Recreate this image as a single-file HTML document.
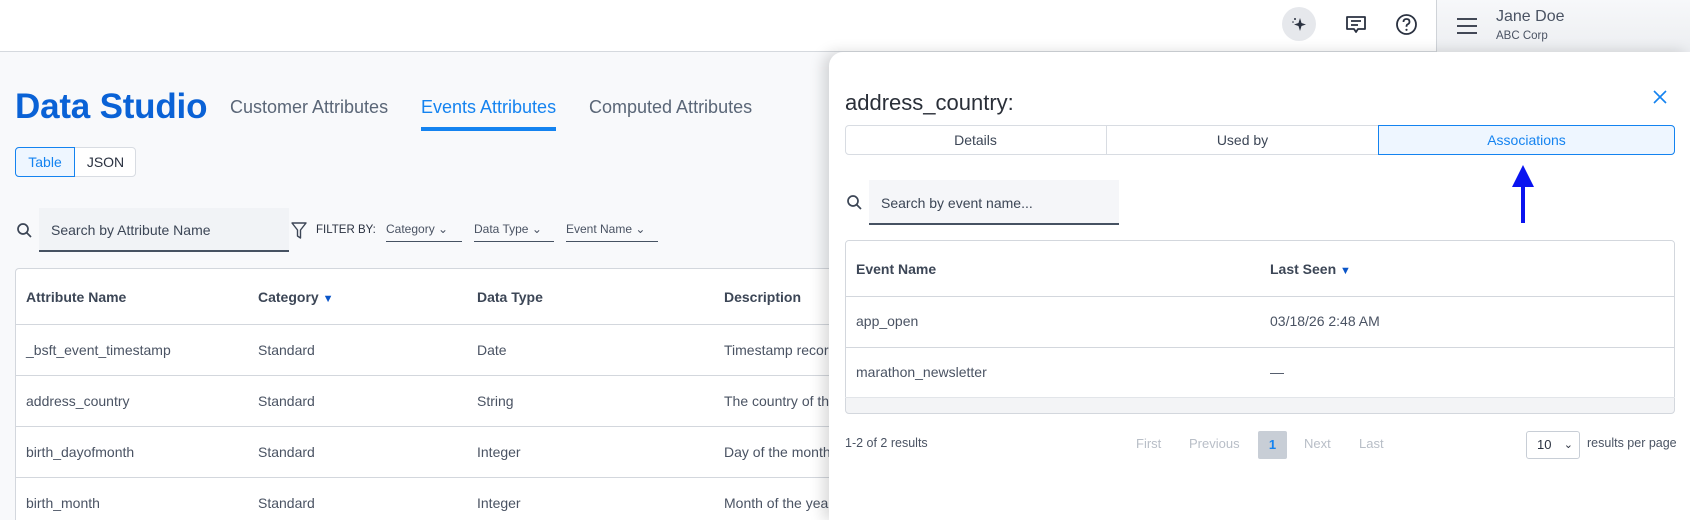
<!DOCTYPE html>
<html style="overflow:hidden;height:520px"><head><meta charset="utf-8"><style>
*{box-sizing:border-box;margin:0;padding:0}
body{width:1690px;height:520px;overflow:hidden;background:#f8f9fb;font-family:"Liberation Sans",Arial,sans-serif;color:#3c4656;position:relative}
.a{position:absolute;white-space:nowrap}
.hdr{position:absolute;left:0;top:0;width:1690px;height:52px;background:#fff;border-bottom:1px solid #d5d9de}
.t{font-size:14px;color:#4a5363}
.th{font-size:14px;font-weight:bold;color:#3c4656}
.line{position:absolute;height:1px;background:#d3d7dd}
</style></head><body>
<div class="hdr"></div>
<div class="a" style="left:1282px;top:7px;width:34px;height:34px;border-radius:50%;background:#e6e8ec"></div>
<svg class="a" style="left:1289px;top:14px" width="20" height="20" viewBox="0 0 20 20"><path d="M11 4 L12.5 9 L17 10.5 L12.5 12 L11 17 L9.5 12 L5 10.5 L9.5 9 Z" fill="#2a3140"/><circle cx="6" cy="5" r="1" fill="#2a3140"/><circle cx="4" cy="8" r="0.8" fill="#2a3140"/></svg>
<svg class="a" style="left:1345px;top:14px" width="22" height="22" viewBox="0 0 22 22"><path d="M2 3 H20 V15 H13 L11 18 L9 15 H2 Z" fill="none" stroke="#2a3140" stroke-width="1.8" stroke-linejoin="round"/><path d="M6 7 H16 M6 11 H13" stroke="#2a3140" stroke-width="1.8"/></svg>
<svg class="a" style="left:1395px;top:13px" width="23" height="23" viewBox="0 0 23 23"><circle cx="11.5" cy="11.5" r="9.5" fill="none" stroke="#2a3140" stroke-width="1.8"/><path d="M8.5 9 Q8.5 6 11.5 6 Q14.5 6 14.5 8.7 Q14.5 10.5 12.3 11.5 Q11.5 12 11.5 13.8" fill="none" stroke="#2a3140" stroke-width="1.8"/><circle cx="11.5" cy="16.8" r="1.1" fill="#2a3140"/></svg>
<div class="a" style="left:1436px;top:0;width:1px;height:52px;background:#cfd3d8"></div>
<div class="a" style="left:1437px;top:0;width:253px;height:52px;background:linear-gradient(#f7f8fa,#eceef1)"></div>
<svg class="a" style="left:1456px;top:17px" width="22" height="18" viewBox="0 0 22 18"><path d="M1 2 H21 M1 9 H21 M1 16 H21" stroke="#2a3140" stroke-width="1.8"/></svg>
<div class="a" style="left:1496px;top:8px;font-size:16px;color:#4a5363">Jane Doe</div>
<div class="a" style="left:1496px;top:30px;font-size:11.5px;color:#4a5363">ABC Corp</div>

<div class="a" style="left:15px;top:87px;font-size:35px;font-weight:bold;color:#0a62d6;letter-spacing:-0.2px">Data Studio</div>
<div class="a" style="left:230px;top:97px;font-size:18px;color:#5a6677">Customer Attributes</div>
<div class="a" style="left:421px;top:97px;font-size:18px;color:#1483f0">Events Attributes</div>
<div class="a" style="left:421px;top:127px;width:135px;height:4px;background:#1483f0"></div>
<div class="a" style="left:589px;top:97px;font-size:18px;color:#5a6677">Computed Attributes</div>
<div class="a" style="left:15px;top:147px;width:121px;height:30px;border:1px solid #d8dce2;border-radius:4px;background:#fff"></div>
<div class="a" style="left:15px;top:147px;width:60px;height:30px;border:1px solid #1483f0;border-radius:4px 0 0 4px;background:#eef6ff;color:#1483f0;font-size:14px;text-align:center;line-height:28px">Table</div>
<div class="a" style="left:75px;top:147px;width:61px;height:30px;font-size:14px;text-align:center;line-height:30px;color:#2a3140">JSON</div>

<svg class="a" style="left:16px;top:222px" width="17" height="17" viewBox="0 0 17 17"><circle cx="7" cy="7" r="5" fill="none" stroke="#3c4656" stroke-width="1.7"/><path d="M10.5 10.5 L15 15" stroke="#3c4656" stroke-width="1.7"/></svg>
<div class="a" style="left:39px;top:208px;width:250px;height:44px;background:#f1f3f6;border-bottom:2px solid #465262"></div>
<div class="a" style="left:51px;top:222px;font-size:14px;color:#3c4656">Search by Attribute Name</div>
<svg class="a" style="left:291px;top:222px" width="16" height="18" viewBox="0 0 16 18"><path d="M1 1 H15 L9.5 8 V16 L6.5 14 V8 Z" fill="none" stroke="#3c4656" stroke-width="1.4" stroke-linejoin="round"/></svg>
<div class="a" style="left:316px;top:224px;font-size:11.5px;color:#2a3140">FILTER BY:</div>
<div class="a" style="left:386px;top:222px;width:76px;height:20px;border-bottom:1px solid #465262;font-size:12px;color:#4a5363">Category ⌄</div>
<div class="a" style="left:474px;top:222px;width:80px;height:20px;border-bottom:1px solid #465262;font-size:12px;color:#4a5363">Data Type ⌄</div>
<div class="a" style="left:566px;top:222px;width:92px;height:20px;border-bottom:1px solid #465262;font-size:12px;color:#4a5363">Event Name ⌄</div>

<div class="a" style="left:15px;top:268px;width:900px;height:252px;background:#fff;border:1px solid #d3d7dd;border-bottom:none;border-radius:4px 4px 0 0"></div>
<div class="line" style="left:15px;top:324px;width:900px"></div>
<div class="line" style="left:15px;top:375px;width:900px"></div>
<div class="line" style="left:15px;top:426px;width:900px"></div>
<div class="line" style="left:15px;top:477px;width:900px"></div>
<div class="a th" style="left:26px;top:289px">Attribute Name</div>
<div class="a th" style="left:258px;top:289px">Category <span style="color:#0a55c8;font-size:11px">▼</span></div>
<div class="a th" style="left:477px;top:289px">Data Type</div>
<div class="a th" style="left:724px;top:289px">Description</div>
<div class="a t" style="left:26px;top:342px">_bsft_event_timestamp</div><div class="a t" style="left:258px;top:342px">Standard</div><div class="a t" style="left:477px;top:342px">Date</div><div class="a t" style="left:724px;top:342px">Timestamp recorded</div>
<div class="a t" style="left:26px;top:393px">address_country</div><div class="a t" style="left:258px;top:393px">Standard</div><div class="a t" style="left:477px;top:393px">String</div><div class="a t" style="left:724px;top:393px">The country of the</div>
<div class="a t" style="left:26px;top:444px">birth_dayofmonth</div><div class="a t" style="left:258px;top:444px">Standard</div><div class="a t" style="left:477px;top:444px">Integer</div><div class="a t" style="left:724px;top:444px">Day of the month</div>
<div class="a t" style="left:26px;top:495px">birth_month</div><div class="a t" style="left:258px;top:495px">Standard</div><div class="a t" style="left:477px;top:495px">Integer</div><div class="a t" style="left:724px;top:495px">Month of the year</div>

<div class="a" style="left:829px;top:52px;width:861px;height:468px;background:#fff;border-radius:14px 0 0 0;box-shadow:-6px 0 14px rgba(0,0,0,0.15)"></div>
<div class="a" style="left:845px;top:90px;font-size:22px;color:#2a2f38">address_country:</div>
<svg class="a" style="left:1652px;top:89px" width="16" height="16" viewBox="0 0 16 16"><path d="M2 2 L14 14 M14 2 L2 14" stroke="#1483f0" stroke-width="1.6"/></svg>
<div class="a" style="left:845px;top:125px;width:830px;height:30px;border:1px solid #d8dce2;border-radius:4px"></div>
<div class="a" style="left:1106px;top:125px;width:1px;height:30px;background:#d8dce2"></div>
<div class="a" style="left:845px;top:125px;width:261px;height:30px;text-align:center;line-height:30px;font-size:14px;color:#3c4656">Details</div>
<div class="a" style="left:1107px;top:125px;width:271px;height:30px;text-align:center;line-height:30px;font-size:14px;color:#3c4656">Used by</div>
<div class="a" style="left:1378px;top:125px;width:297px;height:30px;border:1px solid #1483f0;border-radius:0 4px 4px 0;background:#eef6ff;text-align:center;line-height:28px;font-size:14px;color:#1483f0">Associations</div>
<svg class="a" style="left:1510px;top:163px" width="26" height="62" viewBox="0 0 26 62"><path d="M13 2 L24 24 H15 V60 H11 V24 H2 Z" fill="#0a14f0"/></svg>

<svg class="a" style="left:846px;top:194px" width="17" height="17" viewBox="0 0 17 17"><circle cx="7" cy="7" r="5" fill="none" stroke="#3c4656" stroke-width="1.7"/><path d="M10.5 10.5 L15 15" stroke="#3c4656" stroke-width="1.7"/></svg>
<div class="a" style="left:869px;top:180px;width:250px;height:45px;background:#f5f6f9;border-bottom:2px solid #465262"></div>
<div class="a" style="left:881px;top:195px;font-size:14px;color:#3c4656">Search by event name...</div>

<div class="a" style="left:845px;top:240px;width:830px;height:174px;border:1px solid #d3d7dd;border-radius:4px;background:#f3f4f6;overflow:hidden"><div style="height:157px;background:#fff"></div></div>
<div class="line" style="left:845px;top:296px;width:830px"></div>
<div class="line" style="left:845px;top:347px;width:830px"></div>
<div class="line" style="left:845px;top:397px;width:830px;background:#e2e5e9"></div>
<div class="a th" style="left:856px;top:261px">Event Name</div>
<div class="a th" style="left:1270px;top:261px">Last Seen <span style="color:#0a55c8;font-size:11px">▼</span></div>
<div class="a t" style="left:856px;top:313px">app_open</div>
<div class="a t" style="left:1270px;top:313px">03/18/26 2:48 AM</div>
<div class="a t" style="left:856px;top:364px">marathon_newsletter</div>
<div class="a t" style="left:1270px;top:364px">—</div>

<div class="a" style="left:845px;top:436px;font-size:12.5px;color:#4a5363">1-2 of 2 results</div>
<div class="a" style="left:1136px;top:436px;font-size:13px;color:#b8bec7">First</div>
<div class="a" style="left:1189px;top:436px;font-size:13px;color:#b8bec7">Previous</div>
<div class="a" style="left:1258px;top:431px;width:29px;height:28px;background:#c8ced6;border-radius:2px;text-align:center;line-height:28px;font-size:13px;font-weight:bold;color:#1483f0">1</div>
<div class="a" style="left:1304px;top:436px;font-size:13px;color:#b8bec7">Next</div>
<div class="a" style="left:1359px;top:436px;font-size:13px;color:#b8bec7">Last</div>
<div class="a" style="left:1526px;top:431px;width:54px;height:28px;border:1px solid #c8ced6;border-radius:3px;background:#fff;font-size:13px;line-height:26px;padding-left:10px;color:#2a3140">10 <span style="position:absolute;right:6px;font-size:11px">⌄</span></div>
<div class="a" style="left:1587px;top:436px;font-size:12.5px;color:#4a5363">results per page</div>
</body></html>
